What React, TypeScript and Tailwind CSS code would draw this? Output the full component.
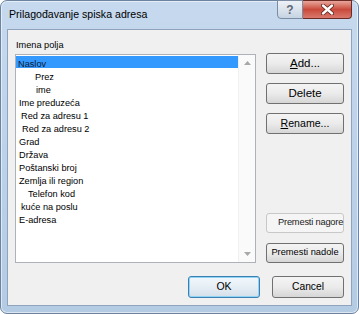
import React from "react";

const items: { label: string; pad: number }[] = [
  { label: "Naslov", pad: 2 },
  { label: "Prez", pad: 19 },
  { label: "ime", pad: 20 },
  { label: "Ime preduzeća", pad: 3 },
  { label: "Red za adresu 1", pad: 5 },
  { label: "Red za adresu 2", pad: 6 },
  { label: "Grad", pad: 3 },
  { label: "Država", pad: 3 },
  { label: "Poštanski broj", pad: 3 },
  { label: "Zemlja ili region", pad: 3 },
  { label: "Telefon kod", pad: 12 },
  { label: "kuće na poslu", pad: 5 },
  { label: "E-adresa", pad: 3 },
];

const btn =
  "flex items-center justify-center rounded-[3px] border border-[#707070] bg-gradient-to-b from-[#f4f4f4] via-[#ebebeb] to-[#d6d6d6] text-black";

export default function App() {
  return (
    <div
      className="w-[359px] h-[314px] bg-white overflow-hidden"
      style={{ fontFamily: '"Liberation Sans", Arial, sans-serif' }}
    >
      <div className="w-[359px] h-[314px] flex flex-col rounded-[7px] border border-[#6d84a0] bg-gradient-to-b from-[#c6d9ee] via-[#bcd2ea] to-[#b4cbe4] shadow-[inset_0_0_0_1px_rgba(255,255,255,0.55)]">
        {/* title bar */}
        <div className="h-[28px] flex justify-between shrink-0">
          <div className="pl-[8px] flex items-center text-[10.6px] text-black">
            Prilagođavanje spiska adresa
          </div>
          <div className="flex self-start mt-[-1px] mr-[6px]">
            <div className="w-[26px] h-[19px] flex items-center justify-center rounded-bl-[4px] border border-[#7b8da3] bg-gradient-to-b from-[#eef2f7] via-[#dbe3ed] to-[#c6d3e2] text-[12px] font-bold text-[#5d6773] leading-none">
              ?
            </div>
            <div className="w-[49px] h-[19px] flex items-center justify-center rounded-br-[4px] border border-l-0 border-[#6b2b24] bg-gradient-to-b from-[#e7a59c] via-[#c94a3c] to-[#d8786c]">
              <svg width="13" height="11" viewBox="0 0 13 11">
                <path d="M2 1.5 L11 9.5 M11 1.5 L2 9.5" stroke="#5a1f18" strokeWidth="4" strokeLinecap="round" />
                <path d="M2 1.5 L11 9.5 M11 1.5 L2 9.5" stroke="#ffffff" strokeWidth="2.4" strokeLinecap="round" />
              </svg>
            </div>
          </div>
        </div>

        {/* client area */}
        <div className="flex-1 mx-[6px] mb-[7px] border border-[#8fa4bc] bg-[#f0f0f0] flex flex-col pt-[8px] pl-[7px] pr-[7px]">
          <div className="flex">
            <div className="w-[241px] flex flex-col">
              <div className="h-[16px] leading-[14px] text-[9.2px] text-black pl-[1px]">Imena polja</div>
              <div className="h-[209px] border border-[#aeb1b8] bg-white flex">
                <div className="flex-1 flex flex-col pt-[1px] text-[9.2px] text-black">
                  {items.map((it, i) => (
                    <div
                      key={it.label}
                      className={
                        "whitespace-nowrap " +
                        (i === 0
                          ? "bg-[#3399ff] text-[#0b1a33] h-[12px] leading-[16px]"
                          : "h-[13px] leading-[18px]")
                      }
                      style={{ paddingLeft: it.pad }}
                    >
                      {it.label}
                    </div>
                  ))}
                </div>
                <div className="w-[17px] bg-[#fafafa] border-l border-[#f0f0f0] flex flex-col justify-between items-center py-[6px]">
                  <svg width="7" height="4" viewBox="0 0 7 4">
                    <path d="M0 4 L3.5 0 L7 4 Z" fill="#a8a8a8" />
                  </svg>
                  <svg width="7" height="4" viewBox="0 0 7 4">
                    <path d="M0 0 L3.5 4 L7 0 Z" fill="#a8a8a8" />
                  </svg>
                </div>
              </div>
            </div>

            <div className="w-[78px] ml-[10px] pt-[15px] flex flex-col">
              <div className={btn + " h-[21px] text-[11.5px]"}>
                <span><span className="underline">A</span>dd...</span>
              </div>
              <div className={btn + " h-[21px] mt-[9px] text-[11.5px]"}>Delete</div>
              <div className={btn + " h-[21px] mt-[9px] text-[10.6px]"}>
                <span><span className="underline">R</span>ename...</span>
              </div>
              <div className="mt-auto h-[20px] rounded-[3px] border border-[#c8c8c8] bg-[#f5f5f5] flex items-center pl-[11px] text-[9.3px] tracking-[-0.2px] text-[#222] whitespace-nowrap">
                Premesti nagore
              </div>
              <div className={btn + " h-[20px] mt-[10px] text-[9.3px] whitespace-nowrap"}>Premesti nadole</div>
            </div>
          </div>

          <div className="flex justify-end gap-[12px] mt-[13px]">
            <div className="w-[72px] h-[22px] flex items-center justify-center rounded-[3px] border border-[#3c7fb1] bg-gradient-to-b from-[#f2f8fc] via-[#e6eef5] to-[#d4dfe9] shadow-[inset_0_0_0_1px_#8fd3f5] text-[10.5px] text-black">
              OK
            </div>
            <div className={btn + " w-[72px] h-[22px] text-[10.3px]"}>Cancel</div>
          </div>
        </div>
      </div>
    </div>
  );
}
